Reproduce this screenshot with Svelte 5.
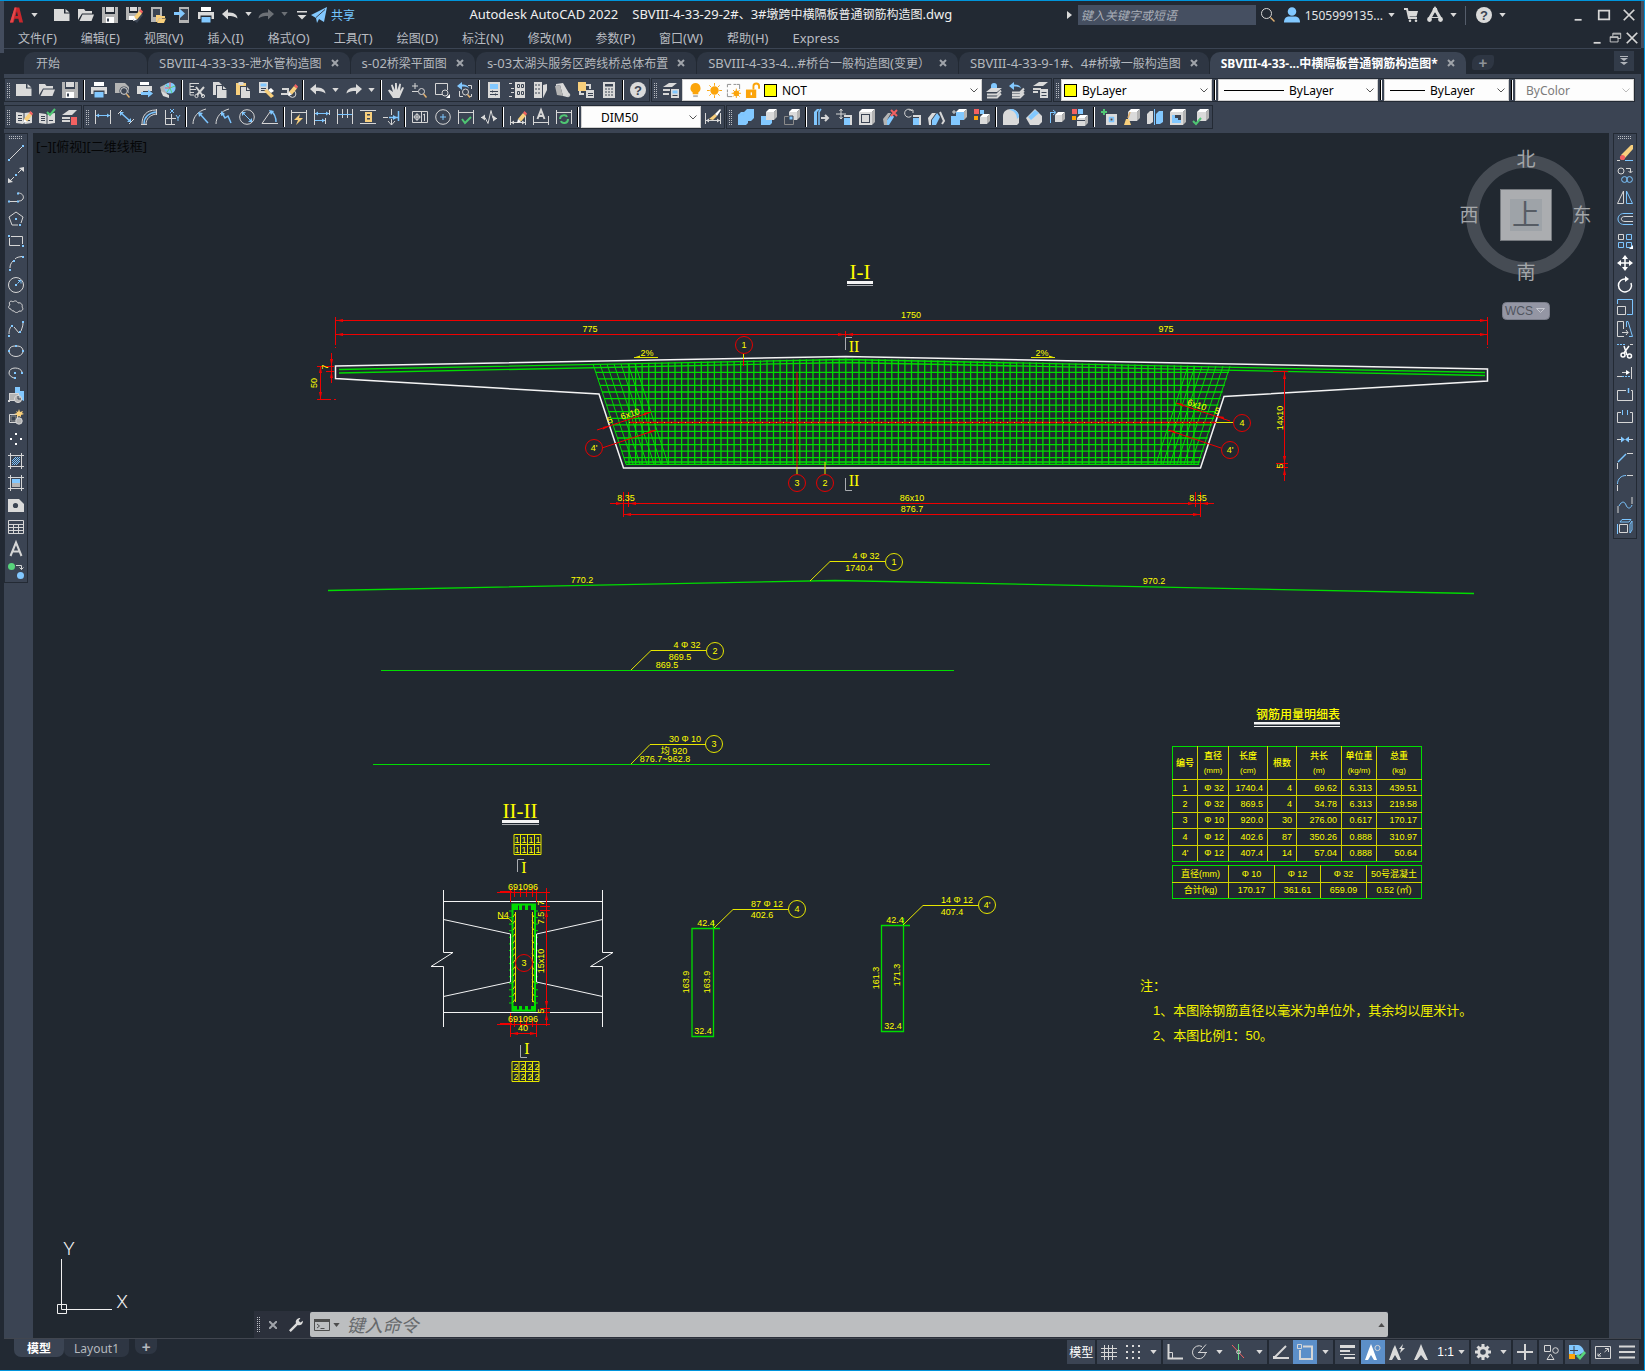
<script>
  const c = (x, y, r) => `M${x - r} ${y}a${r} ${r} 0 1 0 ${2 * r} 0a${r} ${r} 0 1 0 ${-2 * r} 0z`;
  const q = (x, y, w, h) => `M${x} ${y}h${w}v${h}h${-w}z`;
  const pencil = [['Y', 'M8 10l5-6 3 2.500-5 6z'], ['R', 'M13 4l1.500-2L17 4.500 16 6.500z'], ['W', 'M8 10l3 2.500-4 1.500z']];
  const cube = (x, y, s, f = 'L', t = 'W') => [
    [f, q(x, y + 3, s - 3, s - 3)],
    [t, `M${x} ${y + 3}l3-3h${s - 3}l-3 3z`],
    ['K', `M${x + s} ${y}v${s - 3}l-3 3v${-(s - 3)}z`]
  ];

  // Every glyph is a list of [paint, path] pairs on a 16 x 16 grid.
  const icons = {
    new: [['L', 'M0 2h10v4.500h5.500V14H0z'], ['L', 'M11.500 2l4 3.500h-4z']],
    open: [['L', 'M0 2h6l1.500 2H14v2.500H4L0 13z'], ['L', 'M4.500 7.500H16L13.500 14H1.500z']],
    save: [['K', 'M0 0h3v7h10V0h3v16H0z'], ['L', q(4, 0, 8, 5)], ['W', q(4, 10, 8, 6)], ['D', q(5, 11.5, 2, 3)]],
    saveas: [['K', 'M0 0h3v6h9V0h3v6l-7 7H0z'], ['L', q(4, 0, 7, 4)], ['W', q(3, 9, 6, 4)], ['D', 'M7 13l6-8 4 3-6 8z'], ...pencil],
    web: [['K', 'M1 0h11v15H1z'], ['D', q(3, 2, 7, 8)], ['Y', 'M6 8h4l1 1h4v2h-6l-2 4H6z'], ['Y', 'M9.500 11.500H16L14 16H7z']],
    device: [['K', 'M5 0h10v16H5z'], ['D', q(6, 2, 8, 11)], ['B', 'M0 5h6V2l5 4.500L6 11V8H0z']],
    print: [['W', 'M3 0h10v4H3z'], ['L', 'M0 5h16v7h-2.500V8.500h-11V12H0z'], ['B', q(3.5, 10, 9, 5.5)]],
    undo: [['L', 'M0 7l6-5v3.500c5 0 9 1 9.500 6C13 9.300 10 9 6 9v3.500z']],
    redo: [['L', 'M16 7l-6-5v3.500c-5 0-9 1-9.500 6C3 9.300 6 9 10 9v3.500z']],
    more: [['L', q(3, 4, 10, 1.5)], ['L', 'M3.500 8h9L8 12.500z']],
    plane: [['B', 'M0 8L16 0l-3 15-5-3-2 4-1-5z'], ['d', 'M5 10.500L14 2.500']],
    search: [['l', c(6.5, 6.5, 5)], ['y', 'M10.500 10.500l4 4']],
    user: [['B', c(8, 4.5, 4.3)], ['B', 'M0 15.500c0-4 2-6 5-6h6c3 0 5 2 5 6z']],
    cart: [['l2', 'M1 2h3l2 9h8'], ['L', 'M5 4h10l-1.500 5.500H6z'], ['L', c(7, 13.8, 1.3)], ['L', c(13, 13.8, 1.3)]],
    apps: [['l3', 'M2 12.500L8 2l6 10.500'], ['L', c(8, 3, 2.4)], ['L', c(2.5, 12.5, 2.4)], ['L', c(13.500, 12.5, 2.4)], ['l', 'M4 10.500h8']],
    min: [['l2', 'M3 13.500h8']],
    max: [['l2', 'M2 3h12v10H2z']],
    close: [['l2', 'M2 2l12 12M14 2L2 14']],
    restore: [['l', 'M5.500 6V2.500h9v6H11M2.500 6.500h9v6h-9zM2.500 7.500h9M5.500 3.500h9']],
    preview: [['K', 'M1 1h10l4 4v6H1z'], ['D', c(10, 9, 4.6)], ['l', c(10, 9, 3.4)], ['y', 'M12.500 12l3 3.500']],
    publish: [['W', q(3, 0, 9, 3)], ['L', 'M0 4h15v5H6v3H0z'], ['B', 'M4 10h7V7.500l5 4-5 4V13H4z']],
    globe: [['K', 'M0 5l6-3 1 12-5-2z'], ['B', c(10, 6, 5.6)], ['g', 'M6 3l4 3 5-2M7 10l3-4 2 5'], ['r', 'M10 0v6M5 6h5'], ['L', 'M1 9l8 4v3l-6-2z']],
    cut: [['l', 'M1 1.500h9M1 4.500h4M1 7.500h6M1 10.500h4M1 1v12h4'], ['l2', 'M7 5l7 9M15 5l-7 8'], ['l', c(7.5, 14, 1.6)], ['l', c(14, 14, 1.6)]],
    copy: [['L', 'M1 0h6l3 3v10H1z'], ['D', 'M4 3h8l4 4v9H4z'], ['L', 'M5 4h5v4h4.500v8H5z'], ['L', 'M11 4l3.500 3H11z']],
    paste: [['Y', q(1, 1, 10, 12)], ['L', q(3.5, 0, 5, 3)], ['D', q(5, 4, 10, 12)], ['L', 'M6 5h5v4h4v7H6z'], ['L', 'M12 5l3 3h-3z']],
    match: [['L', q(1, 0, 9, 11)], ['B', q(2.5, 1.5, 6, 3)], ['d', 'M3 6.500h5M3 8.500h5'], ['Y', 'M6 9l3-2 7 7-3 2z'], ['W', 'M10 8l3-2 3 3-3 2z']],
    blockedit: [['l2', 'M0 12h8M1 7h6v5'], ['l', c(11.5, 12, 3.4)], ...pencil.map(([k, d]) => [k, d])],
    pan: [['L', 'M5 16L0 8.500l1.500-1L5 10 3 3l1.500-.5L7 8V1h1.800l.5 7L11.500 1.500l1.500.5L12 9l2.500-4 1.500.7-3.500 8-1 2.300z']],
    zoomrt: [['l', 'M1 4h6M4 1v6M1 9.500h6'], ['l', c(10.5, 9.5, 3)], ['y', 'M12.500 12l3 3.500']],
    zoomwin: [['l', 'M9 12.500H1.500v-11h12V8'], ['l', c(11, 11, 3)], ['W', 'M16 12v4h-4z']],
    zoomprev: [['B', 'M0 4l5-4v2.500c4 0 6 1 7 4-2-2-4-2-7-2V8z'], ['l', 'M11 3.500h3.500V7M2.500 9v5.500H6M14.500 12v2.500H12'], ['l', c(8.5, 10, 3)], ['y', 'M10.500 12.500l2.500 3']],
    props: [['L', q(2, 0, 12, 16)], ['B', q(4, 2, 8, 5)], ['d', 'M4 9.500h8M4 12.500h8M6.500 8.500v2M9.500 11.500v2']],
    design: [['L', q(6, 0, 10, 16)], ['d', 'M8.500 2.500h2v3h-2zM12.500 2.500h2v3h-2zM8.500 9.500h2v3h-2zM12.500 9.500h2v3h-2z'], ['l', 'M0 1.500h3M0 14.500h3M2 6.500h3M2 10.500h3']],
    palette: [['L', q(2, 0, 8, 16)], ['d', 'M4 2v12M7 2v12', '2 2'], ['L', 'M11 3l4-1v6l-4 8z']],
    sheetset: [['L', 'M1 2l7-1 7 12-3 2-4-1L5 3 1 4z'], ['K', 'M0 4l5-1 3 11-6-1z'], ['l', c(13, 13, 1.8)]],
    markup: [['Y', q(0, 0, 8, 9)], ['L', q(8, 8, 8, 8)], ['d', 'M10 11.500h5M10 13.500h5'], ['l2', 'M8 3h4v4M2 9v3h4']],
    calc: [['L', q(2, 0, 12, 16)], ['D', q(4, 2, 8, 2.5)], ['d', 'M5 6v9M8 6v9M11 6v9', '2 1']],
    help: [['L', c(8, 8, 8)]],
    layerprops: [['L', 'M0 5l6-4h8L9 5z'], ['l2', 'M0 8h7M0 12h6'], ['L', q(8, 7, 8, 9)], ['B', q(9.5, 8.5, 5, 3)], ['d', 'M9.500 13.500h5']],
    bulb: [['O', 'M8 0a5.500 5.500 0 0 1 3 10v2H5v-2A5.500 5.500 0 0 1 8 0z'], ['K', q(5.5, 13, 5, 2)]],
    sun: [['O', c(8, 8, 4.5)], ['o', 'M8 0v3M8 13v3M0 8h3M13 8h3M2.500 2.500l2 2M11.500 11.500l2 2M13.500 2.500l-2 2M4.500 11.500l-2 2']],
    vpfreeze: [['k', 'M1.500 4.500v-3h4M8 1.500h3M11.500 1.500h3v5M1.500 7v3M1.500 11v3.500h5'], ['O', c(11, 11, 3)], ['o', 'M11 6v10M6 11h10M7.500 7.500l7 7M14.500 7.500l-7 7']],
    unlock: [['O', q(1, 7, 11, 9)], ['o2', 'M9 7V3.500a3 3 0 0 1 6 0V6'], ['W', q(6, 10, 1.5, 3)]],
    laymcur: [['L', 'M0 10l5-4h11l-5 4z'], ['l2', 'M1 12.500h10l4-4M1 15.500h10l4-4'], ['B', 'M5 6V4a3 3 0 1 1 6 0v2z']],
    layprev: [['B', 'M0 4l5-4v2.500c4 0 6 1 7 4-2-2-4-2-7-2V8z'], ['l2', 'M3 10.500h8l4-4M3 13h8l4-4M3 15.500h8l4-4']],
    laystate: [['L', 'M1 4l6-4h9l-5 4z'], ['l2', 'M1 7h8M1 10h5'], ['L', q(8, 7, 8, 9)], ['d', 'M9.500 10.500h5M9.500 13.500h5']],
    book: [['L', 'M0 3l7 1 1 1 1-1 7-1v11l-7 1H7l-7-1z'], ['d', 'M8 5v10M2 6.500h4M2 9.500h4M2 11.500h4M10 11.500h4'], ...pencil.map(([k, d]) => [k, d])],
    bookcheck: [['L', 'M0 4l7 1 1 1 1-1 7-1v10l-7 1H7l-7-1z'], ['d', 'M8 5v10M2 7.500h4M2 9.500h4M2 11.500h4M10 11.500h4'], ['g2', 'M8 3l3 3 5-6']],
    layerred: [['L', 'M0 6l7-5h8l-5 5z'], ['l2', 'M0 9h8M0 12h8'], ['R', q(9, 8, 6, 8)]],
    dimlin: [['l', 'M.500 1v14M15.500 1v14'], ['b', 'M1 6.500h14'], ['B', 'M1 6.500l3-2v4zM15 6.500l-3-2v4z']],
    dimali: [['l', 'M0 5l4-4M11 15l5-5'], ['b2', 'M3 4l9 8'], ['B', 'M2 3h4l-4 4zM13 13V9l-4 4z']],
    dimarc: [['l', 'M1 15C1 7 5 1 15 1M0 15.500h6M15.500 0v6M5 15C5 10 9 6 15 5'], ['b2', 'M3 15C3 9 7 4 15 3']],
    dimord: [['l', 'M1.500 1v14.500H11'], ['b', 'M6 0l4 4M10 0L6 4M12 6l2 3 2-3M14 9v3'], ['l', 'M7.500 5v11M1 9.500h11']],
    dimrad: [['l', 'M0 15C0 8 5 2 13 0'], ['b2', 'M7 5l8 9'], ['B', 'M5 3l5 1-4 4z']],
    dimjog: [['l', 'M0 15C0 8 5 2 13 0'], ['b2', 'M6 4l3 5 3-2 3 7'], ['B', 'M5 2l4 3-4 2z']],
    dimdia: [['l', c(8, 8, 7.3)], ['b', 'M3.500 3.500l9 9'], ['B', 'M3 3h4L3 7zM13 13V9l-4 4z']],
    dimang: [['l', 'M8 3L0 14.500h16'], ['b2', 'M9 2c4 3 5 7 5 11'], ['B', 'M7 1l5 1-3 4z']],
    dimquick: [['l', 'M.500 1v14M15.500 1v14M1 3.500h14'], ['Y', 'M9 5L3 11h4l-2 5 7-7H8z']],
    dimbase: [['l', 'M.500 0v16M15.500 1v5M11.500 9v6'], ['b', 'M1 4.500h14M1 11.500h10'], ['B', 'M1 4.500l3-2v4zM15 4.500l-3-2v4zM11 11.500l-3-2v4z']],
    dimcont: [['l', 'M.500 0v15M5.500 0v9M10.500 0v9M15.500 0v15'], ['b', 'M1 5.500h14']],
    dimspace: [['l', 'M0 1.500h16M0 14.500h16'], ['Y', 'M5 3h7v10H5zM10 5H7v1.500h3zM10 9H7v1.500h3z']],
    dimbreak: [['l', 'M0 8.500h5M8.500 0v6M8.500 10v6M5 12l3.500 4L12 12'], ['b2', 'M6 8.500h9M15.500 2v10'], ['B', 'M14 8.500l-4-2.500v5z']],
    tol: [['l', 'M.500 2.500h15v11H.500zM9.500 3v10'], ['l', c(5, 8, 2.5)], ['l', 'M5 4v8M1.500 8h7M11 6l1.500-1v7']],
    center: [['l', c(8, 8, 7.3)], ['b', 'M8 5v6M5 8h6']],
    inspect: [['l', 'M.500 1v14M15.500 1v14M1 3.500h14'], ['g2', 'M4 10l3 4 6-6']],
    jogline: [['l', 'M0 8.500h4l3 6 3-13 2 8h4'], ['L', 'M0 8.500l4-3v6zM16 9.500l-4-3v6z']],
    dimedit: [['l', 'M.500 7v9M15.500 7v9M1 13.500h14'], ['L', 'M1 13.500l3-2v4zM15 13.500l-3-2v4z'], ...pencil.map(([k, d]) => [k, d])],
    dimtext: [['l', 'M.500 7v9M15.500 7v9M1 13.500h14'], ['l2', 'M4.500 10L8 1l3.500 9M6 7h4']],
    dimupd: [['l', 'M.500 1v14M15.500 1v14M1 3.500h14'], ['g2', 'M4 10c0-4 6-5 7-2M12 10c0 5-6 5-7 2']],
    dimstyle: [['l', 'M.500 4v11M15.500 4v11M1 11.500h14'], ['L', 'M1 11.500l3-2v4zM15 11.500l-3-2v4z'], ['Y', 'M4 10l6-5 2 2-4 4z'], ['W', 'M10 5l5-5 1 1-4 6z']],
    union: [['B', 'M0 6l3-3h3l3-3h7v9l-3 3h-3v2l-2 2H0z'], ['b', 'M0 6h6V3']],
    subtract: [['B', 'M0 7h6v4h5v3l-2 2H0z'], ...cube(5, 0, 11)],
    intersect: [['k', 'M.500 7.500h9v8h-9z'], ...cube(5, 0, 11), ['B', q(5, 7, 4, 4)], ['d', 'M5 7h4v4H5z']],
    extrude: [['B', 'M1 3l3-3h3L4 3v13H1z'], ['b2', 'M8 0L6 3v13'], ['l2', 'M8 9h7M12 6l3 3-3 3']],
    moveface: [['l', 'M5 0v10M0 5h10M3.500 2L5 0l1.500 2M3.500 8L5 10l1.500-2'], ['L', 'M8 6h8v10h-2V8H8z'], ['B', q(8, 9, 6, 7)]],
    offset: [['W', 'M0 3l3-3h13l-3 3z'], ['K', 'M16 0v13l-3 3V3z'], ['L', q(0, 3, 13, 13)], ['D', q(2, 5, 9, 9)], ['L', q(3, 6, 7, 7)]],
    delface: [['K', 'M1 10l5-6h3l-4 7v5H2z'], ['B', 'M5 11l5-6 2 3-5 8H5z'], ['r2', 'M9 1l6 6M15 1L9 7']],
    rotface: [['l', 'M7 2A4 4 0 1 0 6.500 7M4 1h4v3'], ['L', 'M8 6h8v10h-2V8H8z'], ['B', q(8, 9, 6, 7)]],
    taper: [['L', 'M0 9l4-5h4l-5 7v5H1z'], ['B', 'M4 11l5-7 3 4-4 8H4z'], ['l2', 'M12 3l4 9-2 3']],
    copyface: [...cube(5, 0, 11, 'B', 'W'), ['B', q(0, 7, 9, 9)], ['l', 'M1 3h4M3 1v4']],
    colface: [['R', q(0, 0, 5, 5)], ['O', q(0, 7, 4, 4)], ['B', q(6, 1, 4, 4)], ...cube(6, 5, 10)],
    filletedge: [['L', 'M0 7c0-4 3-7 8-7 4 0 8 3 8 8v6l-2 2H0z'], ['B', 'M6 1c5 0 8 4 8 9l2-2c0-4-3-8-8-8z']],
    chamfer: [['L', 'M0 9L9 0l7 7v6l-3 3H4z'], ['B', 'M2 8l7-7 4 3-8 7z']],
    copyedge: [['b', 'M1 3.500h5M1.500 4v10M4 1l3 2.500L4 6'], ...cube(6, 3, 10)],
    coledge: [['R', q(0, 0, 5, 5)], ['O', q(0, 7, 4, 4)], ['B', q(6, 0, 5, 5)], ...cube(5, 6, 11), ['D', q(5, 11, 8, 1)]],
    imprint: [['g2', 'M3 0v6M0 3h6'], ['L', q(5, 5, 11, 11)], ['b2', 'M8.500 8.500h4v4h-4z'], ['D', q(9.5, 9.5, 2, 2)]],
    clean: [...cube(4, 0, 12), ['Y', 'M0 16l2-6h3l2 6z'], ['y', 'M4 9l2-6']],
    separate: [['L', 'M0 5l3-3h3v11l-3 2H0z'], ['B', 'M9 5l3-3h4v11l-3 2H9z'], ['b', 'M7.500 0v16']],
    shell: [...cube(0, 0, 16), ['B', q(2, 6, 9, 8)], ['D', 'M5 6h6v5H8V9H5z']],
    check3d: [...cube(4, 0, 12), ['g2', 'M0 12l3 3 5-6']],
    line: [['l', 'M2 14L14 2'], ['B', q(0, 14, 2, 2)], ['B', q(14, 0, 2, 2)]],
    xline: [['l', 'M1 15L6 10M10 6l5-5'], ['B', q(7, 7, 2, 2)], ['L', 'M16 0v5l-5-4zM0 16v-5l5 4z']],
    pline: [['l', 'M2 12.500h7M10 4c7 0 7 8 1 8'], ['B', q(0, 11.5, 2, 2)], ['B', q(9, 3.5, 2, 2)], ['B', q(9, 11.5, 2, 2)]],
    polygon: [['l', 'M10 14H4L1 6l7-5 7 5-2 6'], ['B', q(7, 7, 2, 2)], ['B', q(11, 13, 2, 2)]],
    rect: [['l', 'M3 3.500h11.500V11M12 12.500H1.500V5'], ['B', q(0, 2, 2, 2)], ['B', q(14, 12, 2, 2)]],
    arc: [['l', 'M2 13c0-3 1-5 3-7M7 4c2-2 4-2 7-2.500'], ['B', q(1, 14, 2, 2)], ['B', q(5, 5, 2, 2)], ['B', q(14, 1, 2, 2)]],
    circle: [['l', c(8, 8, 7.5)], ['B', q(7, 7, 2, 2)], ['b', 'M9.500 6.500L13 3M10 3.500h3v3']],
    cloud: [['l', 'M3 10C0 10 0 7 2 6c-2-3 1-5 3-3 2-2 4-1 5 1 3-1 5 2 4 4 2 2 0 5-3 4-1 2-4 2-5 0-2 0-3-1-3-2z']],
    spline: [['l', 'M1 13c0-5 2-8 3-8M6 6l5 6M13 10c1-3 2-5 2-8'], ['B', q(0, 14, 2, 2)], ['B', q(3, 4, 2, 2)], ['B', q(11, 10, 2, 2)], ['B', q(14, 0, 2, 2)]],
    ellipse: [['l', 'M1 7c1-3 3-4 6-4M9 3c3 0 5 1 6 4M1 9c2 6 12 6 14 0'], ['B', q(7, 2, 2, 2)], ['B', q(0, 7, 2, 2)], ['B', q(14, 7, 2, 2)]],
    ellarc: [['l', 'M14 7C13 2 1 1 1 8c0 2 2 4 5 5'], ['B', q(6, 7, 2, 2)], ['B', q(13, 7, 2, 2)], ['B', q(6, 12, 2, 2)]],
    insert: [['B', 'M7 0h5v4h4v10l-4-2-5-5z'], ['K', q(1, 6, 10, 8)], ['l', 'M1.500 6.500h9v7H1.500z'], ['K', c(10, 12, 3.6)], ['l', c(10, 12, 3.6)], ['d', 'M10 9v3h3'], ['L', q(0, 13, 2, 2)]],
    block: [['k', 'M3 7h5v5H3z'], ['l', 'M1.500 5.500h8v8h-8z'], ['K', c(11, 12, 3.2)], ['l', c(11, 12, 3.2)], ['Y', 'M11 0l1 3 3-1-1 2 2 1-3 1 0 2-2-1-2 1V6L6 5l3-1-1-2 2 1z']],
    point: [['W', q(7, 2, 2, 2) + q(2, 7, 2, 2) + q(12, 7, 2, 2) + q(7, 12, 2, 2)]],
    hatch: [['l', 'M2.500 0v16M13.500 0v16M0 2.500h16M0 13.500h16'], ['b', 'M4 8l4-4M4 12l8-8M8 12l4-4M4 10l6-6M6 12l6-6']],
    gradient: [['l', 'M2.500 0v16M13.500 0v16M0 2.500h16M0 13.500h16'], ['B', q(4, 4, 8, 4)], ['K', q(4, 8, 8, 4)]],
    region: [['L', 'M0 2h11l5 5v8H0z'], ['D', c(7.5, 8.5, 2.6)]],
    table: [['l', 'M.500 1.500h15v13H.500zM0 5.500h16M0 8.500h16M0 11.500h16M5.500 5v10M10.500 5v10']],
    mtext: [['l2', 'M2.500 15L8 1.500 13.500 15M4.500 10.500h7']],
    addsel: [['G', c(3.5, 3.5, 3.5)], ['B', c(12.5, 12.5, 3.5)], ['l', 'M8 2.500h5.500v4M11.500 4.500l2 2 2-2']],
    erase: [['Y', 'M4 10L14 0h2v4L8 13z'], ['R', c(5.5, 12.5, 2.6)], ['b', 'M8 15.500h8'], ['l', 'M0 15.500h3']],
    copyobj: [['l', c(4, 4, 3)], ['l', 'M9 1.500h4.500v4M11.500 4l2 2 2-2'], ['b', c(7.5, 12.5, 2.9)], ['b', c(12.5, 12.5, 2.9)]],
    mirror: [['l', 'M.500 14.500h6V2z'], ['b', 'M9.500 2v12.500h6z']],
    offs: [['b', 'M16 2.500H7c-8 0-8 11 0 11h9'], ['l', 'M16 5.500H8c-5 0-5 5 0 5h8']],
    array: [['l', 'M1.500 1.500h5v5h-5z'], ['b', 'M9.500 1.500h5v5h-5zM1.500 9.500h5v5h-5zM9.500 9.500h5v5h-5z'], ['W', 'M16 12v4h-4z']],
    move: [['w', 'M8 2v12M2 8h12'], ['W', 'M8 0l3 4H5zM8 16l3-4H5zM0 8l4-3v6zM16 8l-4-3v6z']],
    rotate: [['w', 'M14 6a6.500 6.500 0 1 1-5-4'], ['W', 'M8-1l4 3-4 3z']],
    scale: [['b', 'M.500 5V.500h15v15H10'], ['l', 'M.500 7.500h8v8h-8z']],
    stretch: [['l', 'M7 15.500H.500v-15h6V8M5 11.500h6M9 9l2 2.500L9 14'], ['b', 'M12 15.500h3.500L11 .500H9.500V6']],
    trim: [['b', 'M0 1.500h8', '2 1'], ['l', 'M13 1.500h3'], ['w', 'M7 3l3 9M12 3l-5 7'], ['w', c(6, 12, 2)], ['w', c(12.5, 13, 2)]],
    extend: [['l', 'M0 11.500h5M14.500 2v12M5 7.500h7'], ['b', 'M5 11.500h8', '2 1'], ['W', 'M9 5l4 2.500L9 10z']],
    breakpt: [['l', 'M9 3.500H.500v10h15v-10H14'], ['b2', 'M11.500 1v5']],
    breakx: [['l', 'M4 3.500H.500v10h15v-10H13'], ['b', 'M5.500 1v5M10.500 1v5']],
    join: [['l', 'M0 8.500h4M12 8.500h4'], ['B', 'M4 5.500l4 3-4 3zM12 5.500l-4 3 4 3z']],
    chamf: [['l', 'M.500 10v6M10 .500h6'], ['b2', 'M1 9l8-8']],
    fillet: [['l', 'M.500 10v6M10 .500h6'], ['b', 'M.500 9C.500 4 4 .500 9 .500']],
    blend: [['l', 'M1 9v7M15 0v7'], ['b', 'M2 9c3-6 6-4 7-1s4 5 6 0']],
    explode: [['l', 'M2.500 5.500h8v8h-8z'], ['b', 'M3 3l2-2.500h9L12 3zM13 5l2-3v9l-2 3zM.500 5v10']],
    wrench: [['L', 'M0 14l8-8c-1-3 1-6 5-6l-2 3 2 2 3-2c0 4-3 6-6 5l-8 8z']],
    prompt: [['t', 'M.500 2.500h15v11H.500z'], ['T', q(0, 2, 16, 3)], ['t', 'M3 7l2.500 2L3 11M6.500 11.500h4']],
    grid: [['l', 'M0 4.500h16M0 8.500h16M0 12.500h16M3.500 1v15M7.500 1v15M11.500 1v15']],
    snap: [['L', [1, 7, 13].map((y) => [1, 7, 13].map((x) => q(x, y, 2, 2)).join('')).join('')]],
    ortho: [['l2', 'M1.500 0v14.500H16'], ['l', 'M1 8.500h4.500v6']],
    polar: [['l', 'M11 2.500a6.500 6.500 0 1 0 3.500 6M7 8.500h9M8 8.500l7-8']],
    iso: [['r', 'M1 1l12 13'], ['g', 'M7.500 0v16'], ['l', c(7.5, 8, 1.8)]],
    otrack: [['l2', 'M2 13L13 2'], ['l2', 'M3 14h13'], ['L', q(0, 12, 3, 3)]],
    osnap: [['l', 'M.500.500h4v4h-4z'], ['l2', 'M6 2.500h9V15H3V6']],
    lwt: [['L', q(1, 1, 15, 3) + q(1, 6, 10, 2) + q(1, 10, 15, 1) + q(5, 13, 11, 2)]],
    annovis: [['W', 'M6 0l2 5 4 11H9L6 11l-3 5H0L4 5z'], ['l', c(12.5, 4, 2.6)]],
    annoauto: [['L', 'M6 1l2 5 4 10H9L6 11l-3 5H0L4 5z'], ['L', 'M14 0l-4 5h2l-1 4 5-5h-3z']],
    anno: [['L', 'M8 0l2 5 5 11h-3L8 11l-4 5H1L6 5z']],
    gear: [['gr', c(8, 8, 4.3)], ['gt', 'M8 0v3M8 13v3M0 8h3M13 8h3M2.500 2.500l2 2M11.500 11.500l2 2M13.500 2.500l-2 2M4.500 11.500l-2 2']],
    plus: [['l2', 'M8 0v16M0 8h16']],
    isolate: [['l', 'M1.500 1.500h6v6h-6z'], ['l', c(12.5, 6.5, 2.8)], ['l', 'M4 15.500h7L7.500 10z']],
    perf: [['B', 'M0 1h9c3 0 6 4 6 7l-5 3H0z'], ['O', q(0, 10, 6, 5)], ['d', 'M5 2v8M1 6.500h8'], ['G', 'M7 12l2-2 2 2 4-5 2 2-6 7z']],
    clean2: [['l', 'M.500 2.500h15v12H.500z'], ['l', 'M10 4.500h3.500V8M13 5L9.500 8M3 9.500V12h3M3 12l3-3']],
    burger: [['l2', 'M0 2.500h16M0 8h16M0 13.500h16']]
  };

  const quick = ['new', 'open', 'save', 'saveas', 'web', 'device', 'print', 'undo'];
  const menus = ['文件(F)', '编辑(E)', '视图(V)', '插入(I)', '格式(O)', '工具(T)', '绘图(D)', '标注(N)', '修改(M)', '参数(P)', '窗口(W)', '帮助(H)', 'Express'];
  const tabs = ['SBVIII-4-33-33-泄水管构造图', 's-02桥梁平面图', 's-03太湖头服务区跨线桥总体布置', 'SBVIII-4-33-4...#桥台一般构造图(变更）', 'SBVIII-4-33-9-1#、4#桥墩一般构造图', 'SBVIII-4-33-...中横隔板普通钢筋构造图*'];
  const std = 'new open save | print preview publish globe | cut copy paste match blockedit | undo v redo v | pan zoomrt zoomwin zoomprev | props design palette sheetset markup calc | help'.split(' ');
  const refs = 'book bookcheck layerred'.split(' ');
  const dims = 'dimlin dimali dimarc dimord | dimrad dimjog dimdia dimang | dimquick dimbase dimcont dimspace dimbreak | tol center inspect jogline | dimedit dimtext dimupd |'.split(' ');
  const solids = 'union subtract intersect | extrude moveface offset delface rotface taper copyface colface | filletedge chamfer copyedge coledge | imprint clean separate shell check3d'.split(' ');
  const draws = 'line xline pline polygon rect arc circle cloud spline ellipse ellarc insert block point hatch gradient region table mtext addsel'.split(' ');
  const mods = 'erase copyobj mirror offs array move rotate scale stretch trim extend breakpt breakx join chamf fillet blend explode'.split(' ');

  // Cross-section mesh
  const step = 6.57;
  const range = (n) => Array.from({ length: n }, (_, i) => i);
  const meshV = range(87).map((i) => `M${(629 + i * step).toFixed(1)} 357V464`).join('');
  const meshH = [...range(14).map((i) => 372.3 + i * step), 462, 464.5].map((y) => `M590 ${y.toFixed(1)}H1232`).join('');
  const fan = range(7).map((i) => `M${593 + i * 7} 364L${626 + i * 7} 464M${1230 - i * 7} 366L${1198 - i * 7} 464`).join('');
  const sideTicks = range(15).map((i) => `M509 ${(911 + i * step).toFixed(1)}h4M534 ${(911 + i * step).toFixed(1)}h4`).join('');
  const sideHooks = range(14).map((i) => `M515 ${(914 + i * step).toFixed(1)}l-2 3M532 ${(914 + i * step).toFixed(1)}l2 3`).join('');

  // [text, centre x, baseline]
  const labels = [
    ['1750', 911, 318], ['775', 590, 332], ['975', 1166, 332], ['2%', 647, 356], ['2%', 1042, 356],
    ['8.35', 626, 501], ['86x10', 912, 501], ['8.35', 1198, 501], ['876.7', 912, 512],
    ['770.2', 582, 583], ['970.2', 1154, 584], ['4 Φ 32', 866, 559], ['1740.4', 859, 571],
    ['4 Φ 32', 687, 648], ['869.5', 680, 660], ['869.5', 667, 668],
    ['30 Φ 10', 685, 742], ['均 920', 674, 754], ['876.7~962.8', 665, 762],
    ['691096', 523, 890], ['691096', 523, 1022], ['40', 523, 1031], ['N4', 503, 918],
    ['87 Φ 12', 767, 907], ['402.6', 762, 918], ['42.4', 706, 926], ['32.4', 703, 1034],
    ['14 Φ 12', 957, 903], ['407.4', 952, 915], ['42.4', 895, 923], ['32.4', 893, 1029]
  ];
  // [text, centre x, centre y, angle]
  const turned = [
    ['7', 325, 367, -90], ['50', 314, 383, -90], ['14x10', 1280, 418, -90], ['5', 1280, 466, -90],
    ['6x10', 630, 414, -18], ['5', 610, 420, -18], ['6x10', 1197, 405, 18], ['5', 1217, 411, 18],
    ['7', 541, 903, -90], ['7.5', 541, 918, -90], ['15x10', 541, 961, -90], ['5', 541, 1011, -90],
    ['163.9', 686, 982, -90], ['163.9', 707, 982, -90], ['161.3', 876, 978, -90], ['171.3', 897, 975, -90]
  ];
  // [mark, x, y, colour class]
  const marks = [
    ['1', 744, 345, 'red'], ['4', 1242, 423, 'red'], ['3', 797, 483, 'red'], ['2', 825, 483, 'red'],
    ['4\'', 594, 448, 'red'], ['4\'', 1230, 450, 'red'], ['3', 524, 963, 'red'],
    ['1', 894, 562, 'yel'], ['2', 715, 651, 'yel'], ['3', 714, 744, 'yel'], ['4', 797, 909, 'yel'], ['4\'', 987, 905, 'yel']
  ];
  // [tip x, tip y, dx, dy]: arrow heads of the dimension lines
  const heads = [
    [336, 320.5, 1, 0], [1487, 320.5, -1, 0], [336, 334.5, 1, 0], [845, 334.5, -1, 0], [846, 334.5, 1, 0], [1487, 334.5, -1, 0],
    [629, 503.5, 1, 0], [623, 503.5, -1, 0], [1195, 503.5, -1, 0], [1201, 503.5, 1, 0], [624, 514.5, 1, 0], [1200, 514.5, -1, 0],
    [320.5, 366, 0, 1], [320.5, 399, 0, -1], [331.5, 366, 0, -1], [331.5, 371, 0, 1], [1284.5, 372, 0, 1], [1284.5, 463, 0, -1], [1284.5, 468, 0, 1],
    [511, 1033.5, 1, 0], [537, 1033.5, -1, 0], [546.5, 910, 0, 1], [546.5, 1008, 0, -1], [546.5, 1013, 0, 1],
    [651, 412, -1, 0.33], [610, 426, -1, 0.33], [1176, 403, 1, 0.33], [1217, 416, 1, 0.33], [656, 430, -1, 0.33], [1168, 430, 1, 0.33]
  ];
  const head = ([x, y, a, b]) => `M${x} ${y}L${x + a * 7 - b * 1.5} ${y + b * 7 - a * 1.5}L${x + a * 7 + b * 1.5} ${y + b * 7 + a * 1.5}z`;

  const bars = [
    ['1', 'Φ 32', '1740.4', '4', '69.62', '6.313', '439.51'],
    ['2', 'Φ 32', '869.5', '4', '34.78', '6.313', '219.58'],
    ['3', 'Φ 10', '920.0', '30', '276.00', '0.617', '170.17'],
    ['4', 'Φ 12', '402.6', '87', '350.26', '0.888', '310.97'],
    ['4\'', 'Φ 12', '407.4', '14', '57.04', '0.888', '50.64']
  ];
  const heading = [['编号', ''], ['直径', '(mm)'], ['长度', '(cm)'], ['根数', ''], ['共长', '(m)'], ['单位重', '(kg/m)'], ['总重', '(kg)']];
  const runs = (s) => s.split(/([\x20-\x7e]+)/).filter(Boolean);
</script>

{#snippet icon(name)}
  <svg class="ico" viewBox="0 0 16 16" aria-hidden="true">
    {#each icons[name] as [paint, d, dash]}<path class={paint} {d} stroke-dasharray={dash} />{/each}
    {#if name === 'help'}<text class="qm" x="8" y="13">?</text>{/if}
  </svg>
{/snippet}

{#snippet mix(s)}{#each runs(s) as r}<span class:lat={/^[\x20-\x7e]/.test(r)}>{r}</span>{/each}{/snippet}

{#snippet caret()}<svg class="caret" viewBox="0 0 8 5" aria-hidden="true"><path class="L" d="M0 0h8L4 5z" /></svg>{/snippet}
{#snippet chevron()}<svg class="chev" viewBox="0 0 8 5" aria-hidden="true"><path d="M.5.5L4 4 7.500.5" /></svg>{/snippet}

{#snippet tools(list)}
  {#each list as t}
    {#if t === '|'}<i class="sep"></i>
    {:else if t === 'v'}<button class="drop" aria-label="更多">{@render caret()}</button>
    {:else}<button class="tool" aria-label={t}>{@render icon(t)}</button>{/if}
  {/each}
{/snippet}

<div class="app">
  <header class="title">
    <button class="logo" aria-label="AutoCAD">
      <svg viewBox="0 0 16 16" aria-hidden="true"><path d="M1 16L6 0h5l4 16h-4l-1-4H6l-1 4z" fill="#c8282d" /><path d="M7 9l1.500-5L9.500 9z" fill="#232933" /><path d="M1 16L6 0h2L4 16z" fill="#e5484c" /></svg>
    </button>
    <button class="drop" aria-label="应用程序菜单">{@render caret()}</button>
    <div class="quick">
      {#each quick as t}<button class="tool" aria-label={t}>{@render icon(t)}</button>{/each}
      <button class="drop" aria-label="放弃列表">{@render caret()}</button>
      <button class="tool dim" aria-label="redo">{@render icon('redo')}</button>
      <button class="drop dim" aria-label="重做列表">{@render caret()}</button>
      <button class="tool" aria-label="自定义">{@render icon('more')}</button>
      <button class="share">{@render icon('plane')}共享</button>
    </div>
    <h1><span>{@render mix('Autodesk AutoCAD 2022')}</span><span>{@render mix('SBVIII-4-33-29-2#、3#墩跨中横隔板普通钢筋构造图.dwg')}</span></h1>
    <svg class="play" viewBox="0 0 5 8" aria-hidden="true"><path class="L" d="M0 0l5 4-5 4z" /></svg>
    <input class="find" aria-label="搜索" placeholder="键入关键字或短语" />
    <button class="tool" aria-label="搜索">{@render icon('search')}</button>
    <button class="user">{@render icon('user')}<span>1505999135...</span>{@render caret()}</button>
    <button class="tool" aria-label="商店">{@render icon('cart')}</button>
    <button class="tool" aria-label="应用">{@render icon('apps')}</button>
    <button class="drop" aria-label="应用列表">{@render caret()}</button>
    <i class="rule"></i>
    <button class="tool" aria-label="帮助">{@render icon('help')}</button>
    <button class="drop" aria-label="帮助列表">{@render caret()}</button>
    <div class="win">
      <button class="tool" aria-label="最小化">{@render icon('min')}</button>
      <button class="tool" aria-label="最大化">{@render icon('max')}</button>
      <button class="tool" aria-label="关闭">{@render icon('close')}</button>
    </div>
  </header>

  <nav class="menu">
    {#each menus as m}<button>{@render mix(m)}</button>{/each}
    <div class="mdi">
      <button aria-label="最小化文档">{@render icon('min')}</button>
      <button aria-label="还原文档">{@render icon('restore')}</button>
      <button aria-label="关闭文档">{@render icon('close')}</button>
    </div>
  </nav>

  <div class="tabs">
    <button class="tab start">开始</button>
    {#each tabs as t, i}
      <div class="tab" class:active={i === tabs.length - 1}>
        <button>{@render mix(t)}</button>
        <button class="x" aria-label="关闭 {t}"><svg viewBox="0 0 8 8" aria-hidden="true"><path d="M1 1l6 6M7 1L1 7" /></svg></button>
      </div>
    {/each}
    <button class="add" aria-label="新建">+</button>
    <button class="overflow" aria-label="全部文档"><svg viewBox="0 0 8 10" aria-hidden="true"><path d="M0 0h8v1H0zM0 2h8L4 5zM0 6h8L4 9z" fill="#b0b4ba" /></svg></button>
  </div>

  <div class="panel">
    <div class="row">
      <div class="bar"><i class="grip"></i>{@render tools(std)}</div>
      <div class="bar">
        <i class="grip"></i>{@render tools(['layerprops'])}
        <label class="combo layer">
          {@render icon('bulb')}{@render icon('sun')}{@render icon('vpfreeze')}{@render icon('unlock')}<i class="swatch"></i>
          <select aria-label="图层"><option>NOT</option></select>{@render chevron()}
        </label>
        {@render tools(['laymcur', 'layprev', 'laystate'])}
      </div>
      <div class="bar">
        <i class="grip"></i>
        <label class="combo color"><i class="swatch"></i><select aria-label="颜色"><option>ByLayer</option></select>{@render chevron()}</label>
        <i class="sep"></i>
        <label class="combo ltype"><i class="stroke"></i><select aria-label="线型"><option>ByLayer</option></select>{@render chevron()}</label>
        <i class="sep"></i>
        <label class="combo lweight"><i class="stroke"></i><select aria-label="线宽"><option>ByLayer</option></select>{@render chevron()}</label>
        <i class="sep"></i>
        <label class="combo plot"><select aria-label="打印样式" disabled><option>ByColor</option></select>{@render chevron()}</label>
      </div>
    </div>
    <div class="row">
      <div class="bar"><i class="grip"></i>{@render tools(refs)}</div>
      <div class="bar">
        <i class="grip"></i>{@render tools(dims)}
        <label class="combo dimst"><select aria-label="标注样式"><option>DIM50</option></select>{@render chevron()}</label>
        {@render tools(['dimstyle'])}
      </div>
      <div class="bar"><i class="grip"></i>{@render tools(solids)}</div>
    </div>

    <div class="work">
      <div class="side"><i class="hgrip"></i>{#each draws as t}<button aria-label={t}>{@render icon(t)}</button>{/each}</div>

      <main class="canvas">
        <svg class="sheet" viewBox="33 133 1576 1205">
          <text class="vp" x="36" y="151">[−][俯视][二维线框]</text>

          <g class="grn">
            <clipPath id="mesh"><path d="M593 364L845 358.500 1231 366.500 1199 465H626z" /></clipPath>
            <g class="mesh" clip-path="url(#mesh)"><path d={meshV + meshH} /></g>
            <path d={fan} />
            <path class="mesh" d="M339 369.500L845 359.500 1485 372.500M339 373L845 362.500 1485 375.500" />
            <path class="mesh" d="M328 590.500L835 580.500 1474 593.500" />
            <path d="M381 670.500H954M373 764.500H990" />
            <path class="mesh" d="M713.500 921V1036.500H692V928.500H720M903.500 918V1031.500H881.500V925.500H910" />
            <path class="thick" d="M512.500 904.500H535V1010.500H512.500z" />
            <path d={sideTicks} />
            <path class="fill" d="M513 904h5v6h-5zM519 904h3v6h-3zM525 904h3v6h-3zM531 904h4v6h-4zM513 1006h4v5h-4zM519 1006h3v5h-3zM525 1006h3v5h-3zM531 1006h4v5h-4z" />
          </g>

          <g class="wht">
            <path class="thick" d="M335.500 366L845.500 356.500 1487.500 369V381L1224 396.500 1200.500 468H623.500L599 394 335.500 378.500z" />
            <path d="M443.500 890V952.500H453L431 966.500H443.500V1027M602.500 890V952.500H613L590.500 966.500H602.500V1027M443 901.500H603M443 1012.500H603" />
            <path d="M443.500 919.500L510.500 934V982L443.500 996.500M602.500 919.500L536.500 934V982L602.500 996.500" />
            <path class="fill" d="M847 281h26v3h-26zM502 820h37v3h-37zM1254 722h86v2.500h-86zM1254 726h86v1h-86z" />
            <path class="faint" d="M847 285.500H873M502 824.500H539" />
          </g>
          <path class="gry" d="M852 337.500H845.500V350M845.500 478V490.500H852M524 859.500H517.500V872M520.500 1045V1057.500H527" />

          <g class="yl">
            <path d="M743.500 354V360M797 467V474M825 462V474M1216 422.500H1233M634 357.500H658M1031 357.500H1055" />
            <path d="M810 581L830 561.500H885M631 670L651 650.500H706M631 764L650 744.500H706M714 928L733 909.500H788M903 925L923 905.500H978" />
            <path d="M514 834.500H541V854.500H514zM514 844.500H541M520.500 834V855M527.500 834V855M534.500 834V855M512 1061.500H539V1081.500H512zM512 1071.500H539M519 1061V1082M525.500 1061V1082M532.500 1061V1082" />
            <path d="M515.500 912V1002M532.500 912V1002M498 918.500H509L512 922" /><path d={sideHooks} />
            <path class="fill" d="M634 357.500l6-2v2zM1055 357.500l-6-2v2z" />
          </g>

          <g class="rd">
            <path d="M335.500 317V345M1487.500 317V345M336 320.500H1487M336 334.500H1487M845.500 331V337M335.500 347v1M1487.500 347v1" />
            <path d="M320.500 366V400M331.500 353V383M317 366.500H334M317 399.500H331M334 399.500h2M326 371.500H334M1284.500 372V481M1273 371.500H1288M1276 463.500H1288M1276 467.500H1288" />
            <path d="M610 503.500H1214M623.500 514.500H1201M623.500 492V517M628.500 492V507M1195.500 492V507M1200.500 492V517" />
            <path d="M743.500 359V366M797 372V467M597 430L651 412M602 448L656 430M1176 403L1230 421M1221 448L1168 430" />
            <path class="axis" d="M629 422.500H1216" /><path class="dash" d="M629 422.500H1216" />
            <path d="M497 892.500H550M497 1024.500H550M546.500 888V1026M510.500 1013V1037M536.500 1022V1037M511 1033.500H537M540 906.500H550M540 910.500H550M540 1008.500H550M540 1012.500H550" />
            <path d="M510.500 888v14M514.500 888v9M520.500 888v9M526.500 888v9M532.500 888v9M536.500 888v14M514.500 1018v9M520.500 1018v9M526.500 1018v9M532.500 1018v9M500 891.500h12M500 1023.500h12" />
            <path class="fill" d={heads.map(head).join('')} />
          </g>

          {#each marks as [m, x, y, k]}<circle class={k} cx={x} cy={y} r="8.500" /><text class="cad mid" {x} y={y + 3}>{m}</text>{/each}
          {#each labels as [t, x, y]}<text class="cad mid" {x} {y}>{t}</text>{/each}
          {#each turned as [t, x, y, a]}<text class="cad mid" x="0" y="3" transform="translate({x} {y}) rotate({a})">{t}</text>{/each}
          {#each range(4) as i}
            <text class="cad mid" x={517 + i * 7} y="843">1</text><text class="cad mid" x={517 + i * 7} y="853">1</text>
            <text class="cad mid" x={516 + i * 7} y="1070">2</text><text class="cad mid" x={516 + i * 7} y="1080">2</text>
          {/each}

          <text class="sec big" x="860" y="279">I-I</text>
          <text class="sec big" x="520" y="818">II-II</text>
          <text class="sec" x="854" y="352">II</text>
          <text class="sec" x="854" y="486">II</text>
          <text class="sec" x="524" y="873">I</text>
          <text class="sec" x="527" y="1054">I</text>

          <foreignObject x="1172" y="700" width="252" height="202">
            <div class="sched">
              <h2>钢筋用量明细表</h2>
              <table class="t1">
                <colgroup><col class="w25" /><col class="w31" /><col class="w39" /><col class="w29" /><col class="w45" /><col class="w35" /><col class="w45" /></colgroup>
                <thead><tr>{#each heading as [a, b]}<th>{a}{#if b}<small>{b}</small>{/if}</th>{/each}</tr></thead>
                <tbody>{#each bars as r}<tr>{#each r as v}<td>{v}</td>{/each}</tr>{/each}</tbody>
              </table>
              <table class="t2">
                <colgroup><col class="w56" /><col class="w46" /><col class="w46" /><col class="w46" /><col class="w55" /></colgroup>
                <tbody>
                  <tr><th>直径(mm)</th><td>Φ 10</td><td>Φ 12</td><td>Φ 32</td><td>50号混凝土</td></tr>
                  <tr><th>合计(kg)</th><td>170.17</td><td>361.61</td><td>659.09</td><td>0.52 (㎡)</td></tr>
                </tbody>
              </table>
            </div>
          </foreignObject>

          <g class="note">
            <text x="1140" y="990">注：</text>
            <text x="1153" y="1015">1、本图除钢筋直径以毫米为单位外，其余均以厘米计。</text>
            <text x="1153" y="1040">2、本图比例1：50。</text>
          </g>

          <g class="ucs">
            <path d="M57.500 1304.500h9v9h-9zM61.500 1259V1309.500H112" />
            <text x="69" y="1255">Y</text><text x="122" y="1308">X</text>
          </g>

          <g class="compass">
            <circle cx="1526" cy="215" r="53.500" />
            <rect class="face" x="1500.500" y="189.500" width="51" height="51" />
            <rect class="core" x="1510" y="199" width="32" height="32" />
            <text class="top" x="1526" y="225">上</text>
            <text x="1526" y="166">北</text><text x="1526" y="279">南</text><text x="1469" y="222">西</text><text x="1582" y="222">东</text>
            <rect class="wcs" x="1502.500" y="302.500" width="47" height="17" rx="4" />
            <text class="wt" x="1519" y="315">WCS</text><path d="M1536.500 308.500h8l-4 4z" />
          </g>
        </svg>

        <div class="cmd">
          <div class="cmdtools">
            <i class="grip"></i>
            <button class="x" aria-label="关闭命令行"><svg viewBox="0 0 8 8" aria-hidden="true"><path d="M0 0l8 8M8 0L0 8" /></svg></button>
            <button aria-label="自定义">{@render icon('wrench')}</button>
          </div>
          <label class="cmdline">{@render icon('prompt')}<svg class="caret dk" viewBox="0 0 8 5" aria-hidden="true"><path d="M0 0h8L4 5z" /></svg>
            <input aria-label="命令" placeholder="键入命令" />
            <svg class="caret dk" viewBox="0 0 8 5" aria-hidden="true"><path d="M0 5h8L4 0z" /></svg>
          </label>
        </div>
      </main>

      <div class="side"><i class="hgrip"></i>{#each mods as t}<button aria-label={t}>{@render icon(t)}</button>{/each}</div>
    </div>
  </div>

  <footer>
    <button class="ltab on">模型</button><button class="ltab">Layout1</button><button class="ltab plus" aria-label="新建布局">+</button>
    <div class="status">
      <div class="grp"><button class="txt">模型</button></div>
      <div class="grp">{@render tools(['grid', 'snap'])}<button class="sd" aria-label="捕捉设置">{@render caret()}</button></div>
      <div class="grp">{@render tools(['ortho', 'polar'])}<button class="sd" aria-label="极轴设置">{@render caret()}</button>{@render tools(['iso'])}<button class="sd" aria-label="等轴测设置">{@render caret()}</button></div>
      <div class="grp">{@render tools(['otrack'])}<button class="tool lit" aria-label="osnap">{@render icon('osnap')}</button><button class="sd" aria-label="对象捕捉设置">{@render caret()}</button></div>
      <div class="grp">{@render tools(['lwt'])}</div>
      <div class="grp"><button class="tool lit" aria-label="注释可见性">{@render icon('annovis')}</button>{@render tools(['annoauto', 'anno'])}<button class="ratio">1:1 {@render caret()}</button></div>
      <div class="grp">{@render tools(['gear'])}<button class="sd" aria-label="工作空间">{@render caret()}</button></div>
      <div class="grp">{@render tools(['plus'])}</div>
      <div class="grp">{@render tools(['isolate'])}</div>
      <div class="grp">{@render tools(['perf'])}</div>
      <div class="grp">{@render tools(['clean2', 'burger'])}</div>
    </div>
  </footer>
</div>

<style>
  :global(body) { margin: 0; background: #222933; }
  * { box-sizing: border-box; }
  .app {
    height: 100vh; display: flex; flex-direction: column; padding: 0 3px 0 4px;
    border: solid #0095dc; border-width: 1px 1px 1px 0; font: 12px "Noto Sans", "Noto Sans CJK SC", sans-serif; color: #d8d8d8;
    background: linear-gradient(#434c5d, #434c5d) 0 0 / 4px 52px no-repeat, linear-gradient(#434c5d, #434c5d) 100% 0 / 3px 47px no-repeat, #222933;
  }
  button { font: inherit; color: inherit; background: none; border: 0; padding: 0; margin: 0; display: flex; align-items: center; justify-content: center; white-space: nowrap; }
  input, select { font: inherit; border: 0; outline: 0; padding: 0; margin: 0; }
  svg { display: block; flex: none; }
  i { flex: none; display: block; }
  .lat { font-size: 13px; white-space: pre; }

  .ico { width: 16px; height: 16px; overflow: visible; fill: none; }
  .L { fill: #dadada; } .W { fill: #fff; } .K { fill: #b4b4b4; } .B { fill: #82c8ff; } .Y { fill: #f8cf7c; } .R { fill: #f26161; } .G { fill: #58d47c; } .O { fill: #fba40a; } .D { fill: #3b4453; } .T { fill: #4d4d4d; }
  .l, .l2, .l3, .b, .b2, .g, .g2, .r, .r2, .y, .o, .o2, .d, .w, .k, .t, .gr, .gt { fill: none; }
  .l { stroke: #d6d6d6; } .l2 { stroke: #d6d6d6; stroke-width: 2; } .l3 { stroke: #d6d6d6; stroke-width: 3; }
  .b { stroke: #7cc5ff; } .b2 { stroke: #7cc5ff; stroke-width: 1.5; }
  .g { stroke: #58d47c; } .g2 { stroke: #4fc673; stroke-width: 2; } .r { stroke: #f26161; } .r2 { stroke: #f26161; stroke-width: 2; }
  .y { stroke: #e0b070; stroke-width: 1.5; } .o { stroke: #fba40a; } .o2 { stroke: #fba40a; stroke-width: 2; } .d { stroke: #3b4453; } .w { stroke: #fff; stroke-width: 1.5; } .k { stroke: #8b8b8b; } .t { stroke: #4d4d4d; }
  .gr { stroke: #dadada; stroke-width: 3; } .gt { stroke: #dadada; stroke-width: 3; }
  .qm { font: bold 13px "Liberation Sans", sans-serif; fill: #3b4453; text-anchor: middle; }

  .title { height: 28px; flex: none; display: flex; align-items: center; }
  .logo { width: 24px; } .logo svg { width: 15px; height: 16px; }
  .title .tool { width: 24px; } .drop { width: 12px; height: 22px; }
  .caret { width: 7px; height: 4px; } .dim { opacity: .4; }
  .quick { display: flex; margin-left: 10px; }
  .quick .tool, .share { height: 24px; }
  .share { color: #74c6ff; gap: 4px; margin-left: -3px; }
  h1 { flex: 1; display: flex; justify-content: center; align-items: center; gap: 14px; margin: 0 0 2px; font-size: 12px; font-weight: 400; color: #f0f0f0; white-space: nowrap; }
  .play { width: 5px; height: 8px; margin-right: 6px; }
  .find { width: 178px; height: 20px; background: #454f61; color: #fff; padding: 0 3px; font-style: italic; }
  .find::placeholder { color: #a9aeb8; opacity: 1; }
  .user { color: #e4e4e4; font-size: 12px; gap: 5px; margin: 0 4px; }
  .rule { width: 1px; height: 19px; background: #555d6b; margin: 0 6px; }
  .win { display: flex; margin-left: 58px; } .win .tool { width: 25px; }
  .win .ico { width: 14px; height: 14px; }

  .menu { height: 19px; flex: none; display: flex; align-items: center; gap: 24px; padding: 0 0 2px 14px; color: #b9bcc2; }
  .mdi { margin-left: auto; display: flex; gap: 3px; padding-right: 2px; } .mdi .ico { width: 14px; height: 14px; }

  .tabs { height: 26px; flex: none; display: flex; align-items: flex-end; padding: 0 7px 0 20px; border-top: 1px solid #3b4453; color: #b4b8be; }
  .tab { height: 22px; background: #2e3643; border-radius: 10px 10px 0 0; display: flex; align-items: center; gap: 9px; padding: 0 11px; margin-right: 1px; }
  .tab.start { width: 123px; justify-content: flex-start; padding-left: 12px; }
  .tab.active { background: #3b4453; color: #fff; font-weight: 700; }
  .tab.active .lat { font-size: 12px; }
  .x svg { width: 8px; height: 8px; } .x path { stroke: #a0a4aa; stroke-width: 2; fill: none; }
  .add { width: 22px; height: 15px; margin: 0 0 4px 5px; background: #2e3643; border-radius: 8px 2px; font: bold 15px "Liberation Sans", sans-serif; color: #8d9299; }
  .overflow { width: 20px; height: 20px; background: #323b49; margin: 0 0 3px auto; } .overflow svg { width: 8px; height: 10px; }

  .panel { flex: 1; min-height: 0; display: flex; flex-direction: column; background: #3b4453; padding-top: 4px; }
  .row { display: flex; gap: 1px; height: 24px; flex: none; margin-bottom: 3px; }
  .bar { display: flex; align-items: center; border: 1px solid #232a34; }
  .bar .tool { width: 23px; height: 22px; }
  .bar .drop { width: 13px; }
  .grip {
    width: 4px; height: 15px; margin: 0 1px 0 2px;
    background: repeating-linear-gradient(#b9bcc2 0 1px, transparent 1px 2px) 0 0 / 1px 100% no-repeat, repeating-linear-gradient(#b9bcc2 0 1px, transparent 1px 2px) 2px 0 / 1px 100% no-repeat;
  }
  .bar .sep { width: 6px; height: 20px; background: linear-gradient(#fff, #fff) 3px 0 / 1px 100% no-repeat, linear-gradient(#000, #000) 2px 0 / 1px 100% no-repeat; }
  .combo { height: 22px; background: #fdfdfd; display: flex; align-items: center; color: #000; padding: 0 3px 0 5px; border: 1px solid #d0d0d0; }
  .combo select { flex: 1; min-width: 0; appearance: none; background: none; color: #000; font-size: 12px; opacity: 1; }
  .chev { width: 8px; height: 5px; fill: none; stroke: #555; }
  .layer { width: 300px; gap: 4px; } .swatch { width: 13px; height: 13px; background: #ff0; border: 1px solid #000; margin-right: 5px; }
  .layer .ico { width: 15px; height: 15px; }
  .layer .swatch { margin-right: 1px; }
  .color { width: 151px; padding-left: 2px; } .ltype { width: 160px; } .lweight { width: 125px; } .plot { width: 119px; padding-left: 10px; } .plot select { color: #7b7b7b; }
  .plot .chev { stroke: #bbb; }
  .stroke { height: 1px; width: 60px; background: #000; margin-right: 5px; } .lweight .stroke { width: 35px; }
  .dimst { width: 120px; padding-left: 19px; }

  .work { flex: 1; min-height: 0; display: flex; margin-top: 1px; }
  .side { width: 24px; align-self: flex-start; border: 1px solid #232a34; display: flex; flex-direction: column; align-items: center; padding: 2px 0 0; margin: 0 5px 0 0; }
  .canvas + .side { margin: 0 4px 0 4px; }
  .side button { width: 22px; height: 22px; }
  .hgrip {
    width: 14px; height: 4px; margin-bottom: 2px;
    background: repeating-linear-gradient(90deg, #b9bcc2 0 1px, transparent 1px 2px) 0 0 / 100% 1px no-repeat, repeating-linear-gradient(90deg, #b9bcc2 0 1px, transparent 1px 2px) 0 2px / 100% 1px no-repeat;
  }
  .canvas { flex: 1; min-width: 0; position: relative; background: #212830; overflow: hidden; }
  .sheet { width: 100%; height: 100%; fill: none; }
  .vp { font: 13px "Noto Sans", "Noto Sans CJK SC", sans-serif; fill: #050607; }
  .grn { stroke: #00dc00; } .wht { stroke: #f4f4f4; } .yl { stroke: #e6e600; } .rd { stroke: #f00000; } .gry { stroke: #a9acb0; fill: none; }
  .wht .thick { stroke-width: 1.5; } .grn .thick { stroke-width: 2; } .mesh { stroke-width: 1.3; } .faint { stroke: #a9acb0; }
  .fill { stroke: none; } .grn .fill { fill: #00dc00; } .wht .fill { fill: #f4f4f4; } .yl .fill { fill: #e6e600; } .rd .fill { fill: #f00000; }
  .axis { stroke-width: 1.3; } .rd .dash { stroke: #d8c800; stroke-dasharray: 1 6; }
  .red { stroke: #e60000; } .yel { stroke: #e6e600; }
  .cad { font: 9px "Liberation Sans", "Noto Sans CJK SC", sans-serif; fill: #ff0; }
  .mid { text-anchor: middle; }
  .sec { font: 16px "Liberation Serif", serif; fill: #ff0; text-anchor: middle; } .sec.big { font-size: 21px; }
  .note { font: 13px "Liberation Sans", "Noto Sans CJK SC", sans-serif; fill: #f2f200; }
  .ucs { stroke: #f0f0f0; } .ucs text { font: 300 19px Roboto, sans-serif; fill: #f0f0f0; stroke: none; text-anchor: middle; }
  .compass circle { stroke: #464c54; stroke-width: 13; } .face { fill: #abadb0; stroke: #74787d; } .core { fill: #9ea3a8; }
  .compass text { font: 19px "Noto Sans CJK SC", sans-serif; fill: #a4a7aa; text-anchor: middle; }
  .compass .top { font-size: 28px; fill: #565c64; } .wcs { fill: #9496a4; stroke: #7b7e8b; } .compass path { stroke: #c6c8d0; }
  .compass .wt { font: 12px "Liberation Sans", sans-serif; fill: #50545e; }

  .sched { font: 9px "Liberation Sans", "Noto Sans CJK SC", sans-serif; color: #ff0; }
  h2 { margin: 0; height: 46px; text-align: center; font-size: 12px; line-height: 27px; font-weight: 500; font-family: "Noto Sans CJK SC", sans-serif; }
  table { border-collapse: collapse; table-layout: fixed; width: 250px; border: 1px solid #0d0; }
  .t1 { height: 116px; } .t2 { margin-top: 3px; height: 34px; }
  td, th { border: 1px solid #d2d200; border-width: 1px; padding: 0 4px; line-height: 10px; text-align: right; font-weight: 400; white-space: nowrap; }
  tr:first-child > * { border-top-color: #0d0; } .t1 tbody tr:first-child > * { border-top-color: #d2d200; }
  tbody tr:last-child > * { border-bottom-color: #0d0; } tr > :first-child { border-left-color: #0d0; } tr > :last-child { border-right-color: #0d0; }
  th { padding: 0; text-align: center; } thead th { height: 33px; font-weight: 500; } .t1 td:first-child, .t2 td { text-align: center; padding: 0; }
  small { display: block; font-size: 8px; margin-top: 5px; }
  .w25 { width: 25px; } .w31 { width: 31px; } .w39 { width: 39px; } .w29 { width: 29px; } .w45 { width: 45px; } .w35 { width: 35px; } .w46 { width: 46px; } .w55 { width: 55px; } .w56 { width: 56px; }

  .cmd { position: absolute; left: 14%; right: 14%; bottom: 0; height: 27px; display: flex; background: #2b303b; padding: 1px 0; }
  .cmdtools { width: 56px; flex: none; display: flex; align-items: center; gap: 7px; padding-left: 1px; }
  .cmdtools .ico { width: 14px; height: 14px; margin-left: 5px; }
  .cmdline { flex: 1; display: flex; align-items: center; background: #bcbec0; border-radius: 2px; padding: 0 3px 0 4px; }
  .cmdline input { flex: 1; min-width: 0; background: none; font-size: 18px; font-style: italic; margin-left: 7px; }
  .cmdline input::placeholder { color: #66696c; opacity: 1; }
  .dk { margin-left: 3px; } .dk path { fill: #4d4d4d; }

  footer { height: 32px; flex: none; display: flex; align-items: flex-start; border-top: 1px solid #41464f; padding-left: 10px; }
  .ltab { height: 18px; background: #2e3643; border-radius: 0 0 7px 7px; padding: 0 10px; color: #b4b8be; margin-right: 2px; }
  .ltab.on { background: #3b4453; color: #fff; font-weight: 700; padding: 0 13px; margin-right: 0; }
  .ltab.plus { width: 22px; height: 15px; padding: 0; font: bold 15px "Liberation Sans", sans-serif; margin-left: 4px; }
  .status { margin: 1px 2px 0 auto; display: flex; gap: 2px; }
  .grp { display: flex; height: 24px; background: #3b4453; }
  .grp .tool { width: 24px; } .sd { width: 16px; } .lit { background: #5c8fc9; }
  .txt { padding: 0 2px; color: #fff; } .ratio { gap: 4px; padding: 0 4px; font: 12px "Liberation Sans", sans-serif; color: #fff; }
</style>
